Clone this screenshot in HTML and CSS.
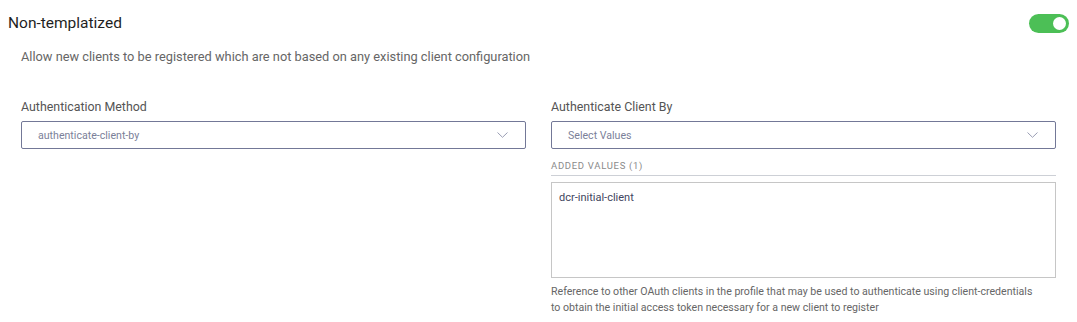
FILE: index.html
```html
<!DOCTYPE html>
<html>
<head>
<meta charset="utf-8">
<link rel="stylesheet" href="styles.css">
</head>
<body>
<div class="page">
  <div class="header">
    <div class="title">Non-templatized</div>
    <div class="toggle"><span class="knob"></span></div>
  </div>
  <p class="desc">Allow new clients to be registered which are not based on any existing client configuration</p>
  <div class="grid">
    <div class="field">
      <div class="label">Authentication Method</div>
      <div class="select">
        <span class="value">authenticate-client-by</span>
        <svg class="chev" width="11" height="6" viewBox="0 0 11 6"><path d="M0.5 0.5 L5.5 5.3 L10.5 0.5" fill="none" stroke="#9a9eb4" stroke-width="1"/></svg>
      </div>
    </div>
    <div class="field">
      <div class="label">Authenticate Client By</div>
      <div class="select">
        <span class="value">Select Values</span>
        <svg class="chev" width="11" height="6" viewBox="0 0 11 6"><path d="M0.5 0.5 L5.5 5.3 L10.5 0.5" fill="none" stroke="#9a9eb4" stroke-width="1"/></svg>
      </div>
      <div class="added">ADDED VALUES (1)</div>
      <div class="values">
        <div class="item">dcr-initial-client</div>
      </div>
      <p class="help">Reference to other OAuth clients in the profile that may be used to authenticate using client-credentials to obtain the initial access token necessary for a new client to register</p>
    </div>
  </div>
</div>
</body>
</html>
```

FILE: styles.css
```css
html, body {
  margin: 0;
  padding: 0;
  background: #fff;
}
body {
  font-family: Roboto, "Liberation Sans", sans-serif;
}
.page {
  width: 1077px;
}
.header {
  display: flex;
  justify-content: space-between;
  align-items: center;
  padding: 14px 8px 0 8px;
  height: 19px;
}
.title {
  font-size: 15.5px;
  line-height: 19px;
  color: #1f1f1f;
}
.toggle {
  position: relative;
  width: 40px;
  height: 19px;
  border-radius: 10px;
  background: #4cbf56;
}
.knob {
  position: absolute;
  right: 3px;
  top: 3px;
  width: 13px;
  height: 13px;
  border-radius: 50%;
  background: #fff;
}
.desc {
  margin: 16px 21px 0 21px;
  font-size: 12.8px;
  line-height: 16px;
  color: #666;
}
.grid {
  display: grid;
  grid-template-columns: 1fr 1fr;
  column-gap: 25px;
  padding: 0 21px;
  margin-top: 34px;
}
.label {
  font-size: 12.4px;
  line-height: 16px;
  color: #555;
}
.select {
  margin-top: 6px;
  height: 26px;
  border: 1px solid #737897;
  border-radius: 2px;
  display: flex;
  align-items: center;
  justify-content: space-between;
  padding: 0 17px 0 16px;
}
.value {
  font-size: 10.6px;
  color: #7b7f99;
}
.chev {
  display: block;
}
.added {
  margin-top: 11px;
  font-size: 9.5px;
  line-height: 12px;
  letter-spacing: 0.7px;
  color: #8a8a8a;
  padding-bottom: 3px;
  border-bottom: 1px solid #cdd0d6;
}
.values {
  margin-top: 6px;
  height: 94px;
  border: 1px solid #c6c6c6;
  padding: 0 7px;
}
.item {
  margin-top: 8px;
  font-size: 11px;
  line-height: 14px;
  color: #3f4560;
}
.help {
  margin: 6px 0 0 0;
  padding-right: 16px;
  font-size: 10.6px;
  line-height: 16px;
  color: #666;
}
```
